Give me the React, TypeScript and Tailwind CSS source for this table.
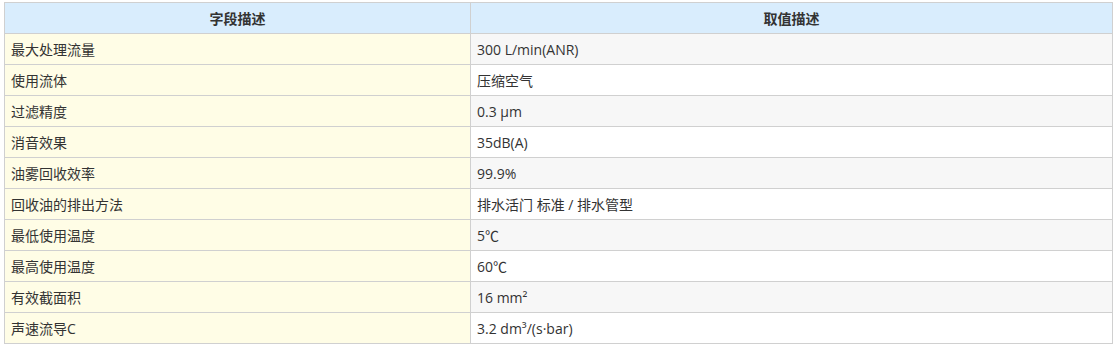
const rows: [string, string][] = [
  ['最大处理流量', '300 L/min(ANR)'],
  ['使用流体', '压缩空气'],
  ['过滤精度', '0.3 μm'],
  ['消音效果', '35dB(A)'],
  ['油雾回收效率', '99.9%'],
  ['回收油的排出方法', '排水活门 标准 / 排水管型'],
  ['最低使用温度', '5℃'],
  ['最高使用温度', '60℃'],
  ['有效截面积', '16 mm²'],
  ['声速流导C', '3.2 dm³/(s·bar)'],
]

export default function App() {
  return (
    <div className="pl-[4px] pt-[2px] bg-white text-[#333] text-[14px] font-['Open_Sans','Noto_Sans_CJK_SC',sans-serif]">
      <table className="w-[1109px] border-collapse table-fixed">
        <thead>
          <tr className="bg-[#d9edfd]">
            <th className="w-[466px] h-[31px] p-0 border border-[#d0d0d0] font-bold text-center">字段描述</th>
            <th className="h-[31px] p-0 border border-[#d0d0d0] font-bold text-center">取值描述</th>
          </tr>
        </thead>
        <tbody>
          {rows.map(([k, v], i) => (
            <tr key={k}>
              <td className="h-[31px] py-0 px-[6px] border border-[#d0d0d0] bg-[#fffde6]">{k}</td>
              <td className={`h-[31px] py-0 px-[6px] border border-[#d0d0d0] ${i % 2 === 0 ? 'bg-[#f7f7f7]' : 'bg-white'}`}>{v}</td>
            </tr>
          ))}
        </tbody>
      </table>
    </div>
  )
}
